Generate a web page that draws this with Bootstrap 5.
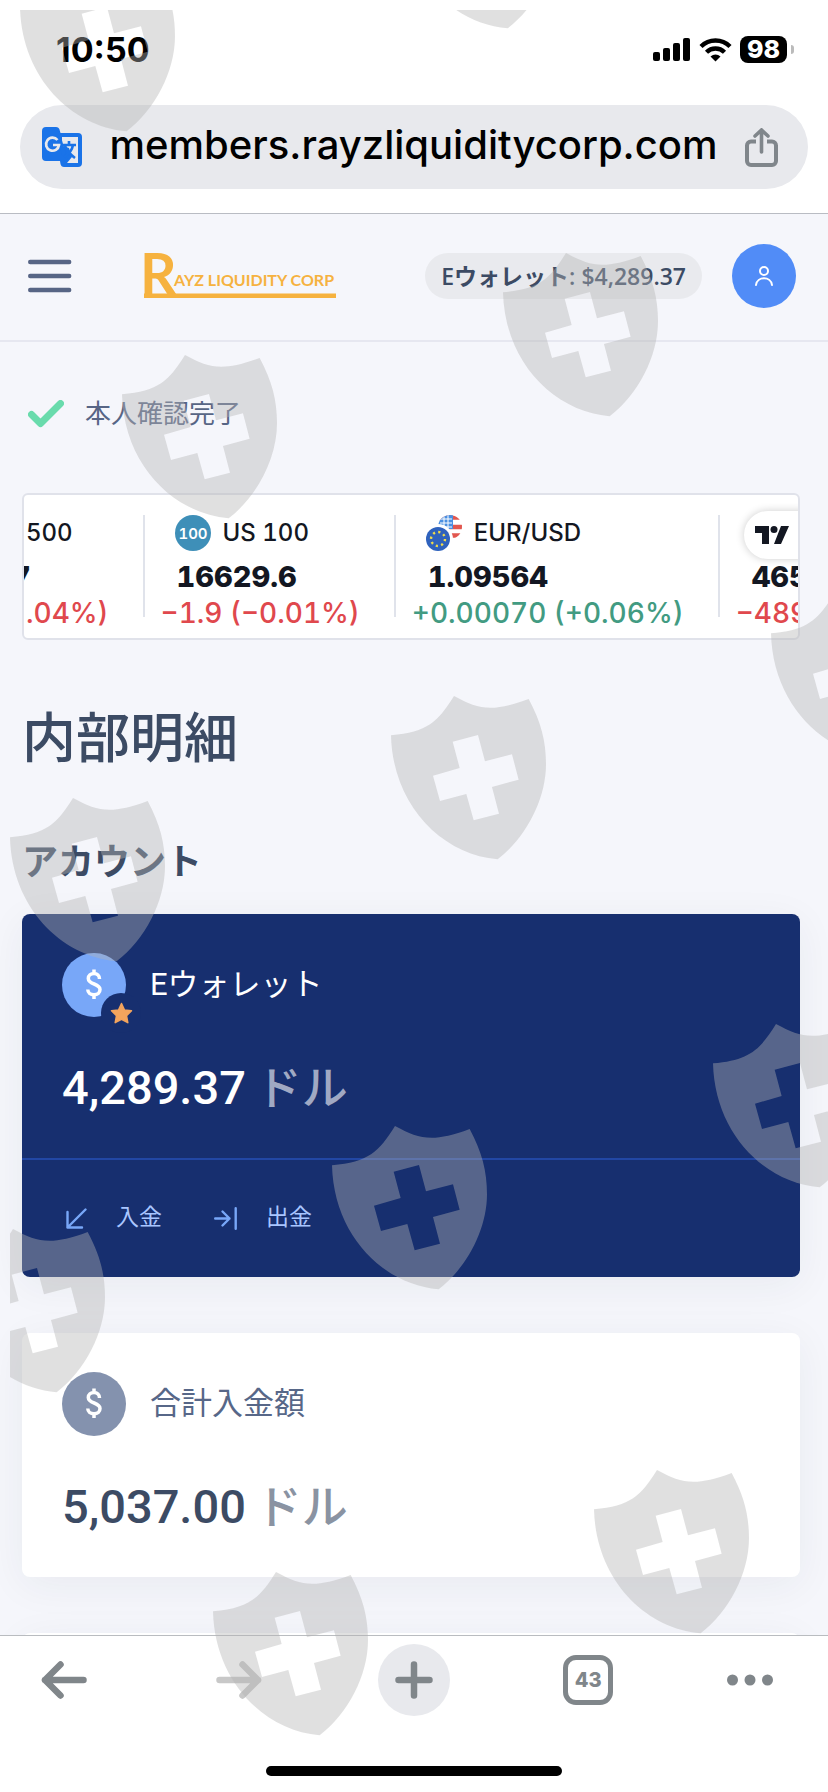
<!DOCTYPE html>
<html lang="ja">
<head>
<meta charset="utf-8">
<meta name="viewport" content="width=device-width, initial-scale=1">
<title>内部明細</title>
<link href="https://cdn.jsdelivr.net/npm/bootstrap@5.3.0/dist/css/bootstrap.min.css" rel="stylesheet">
<style>
body{font-family:Roboto,"Noto Sans CJK JP",sans-serif;background:#fff;color:#3c4b64}
svg{display:block;flex:none}
button{background:none;border:0;padding:0}
.screen{height:100vh}
.status{font-family:Inter,sans-serif;color:#000;height:105px;padding:0 34px 6px 56px}
.clock{font-size:34px;font-weight:700}
.battery{width:47px;height:27px;border-radius:8px;background:#000;color:#fff;font-size:25px;line-height:27px;font-weight:800}
.nub{width:3px;height:9px;border-radius:0 3px 3px 0;background:#bbb}
.address{height:84px;border-radius:42px;background:#e8e9ed;padding:0 30px 0 22px;margin:0 20px 24px}
.address input{font-family:Inter,sans-serif;font-size:40px;line-height:48px;font-weight:500;color:#000;background:none;border:0;min-width:0;outline:0}
.page{background:#f5f6fb;border-top:1px solid #b9bcc3}
.topbar{height:128px;border-bottom:2px solid #e6e7f0;padding:0 32px 2px 28px}
.brand-logo{margin-left:72px}
.wallet{margin-left:auto;height:46px;border-radius:23px;background:#e9eaee;color:#3c4b64;padding:0 16px;font:600 23px/46px "Open Sans","Noto Sans CJK JP",sans-serif;white-space:nowrap}
.avatar{width:64px;height:64px;background:#518cf7;margin-left:30px}
.content-area{padding:48px 28px 0 22px}
.verified{font-size:26px;line-height:48px;color:#576585;margin-bottom:55px;padding-left:6px;gap:21px}
.ticker{font-family:Inter,sans-serif;font-variant-numeric:tabular-nums;color:#131722;background:#fff;border:2px solid #e0e2ea;border-radius:6px;padding:20px 0 7px;white-space:nowrap}
.quote{padding:0 34px 0 18px;flex:none}
.quote + .quote{background:linear-gradient(#e0e3eb,#e0e3eb) no-repeat left top/2px 102px}
.quote-first{padding-left:2px}
.quote .sym{height:36px;padding-left:14px;gap:12px;font-size:24px;font-weight:500}
.quote .val{font-size:29px;line-height:36px;font-weight:800;margin-top:8px;padding-left:16px}
.quote .chg{font-size:28px;line-height:36px;font-weight:500}
.quote-first .sym{padding-left:0}
.quote-first .val{padding-left:0;margin-left:-14px}
.down{color:#e0484d}
.up{color:#429b82}
.tv{width:80px;height:48px;margin:-4px 0 -8px 8px;border-radius:24px;padding-left:11px;background:#fff;box-shadow:0 0 8px rgba(0,0,0,.2)}
h1{font-size:54px;line-height:64px;font-weight:500;margin:68px 0 67px}
h2{font-size:36px;line-height:48px;font-weight:700;margin:0 0 27px}
.account{border:0;border-radius:8px;color:#3c4b64;box-shadow:0 8px 40px rgba(40,45,60,.06);margin-bottom:56px}
.account .card-body{padding:39px 40px 38px}
.coin{width:64px;height:64px}
.name{font-size:31px;line-height:64px;color:#576788}
.amount{font-size:47px;line-height:64px;font-weight:500;margin-top:39px;gap:10px}
.unit{font-size:46px;font-weight:500;color:#8a93a2}
.primary-acct{background:#172f6f;color:#fff}
.primary-acct .name{color:#fff}
.primary-acct .unit{color:#a0a9c3}
.actions{border-top:2px solid #2247a4;height:119px;padding:0 44px;gap:52px}
.actions a{font-size:23px;color:#a9c6ff;text-decoration:none;gap:29px}
.toolbar{border-top:1px solid #b9bcc0;height:157px;background:#fff;padding:8px 55px 16px 28px}
.tool{width:72px;height:72px}
.tool-last{width:46px}
.new-tab{background:#e8e9ed}
.tab-count{width:50px;height:50px;border:5px solid #80868a;border-radius:13px;font:800 20px/40px Inter,sans-serif;color:#80868a}
.home-row{padding-left:27px}
.home-bar{width:296px;height:10px;border-radius:5px;background:#000}
.pattern{inset:10px 0 0 10px;pointer-events:none;overflow:hidden;z-index:5}
</style>
</head>
<body>
<div class="screen position-relative d-flex flex-column overflow-hidden">
  <div class="status d-flex align-items-center justify-content-between flex-shrink-0">
    <span class="clock">10:50</span>
    <div class="d-flex align-items-center">
      <svg width="38" height="24" viewBox="0 0 38 24"><rect y="14" width="7" height="9" rx="2"/><rect x="10" y="10" width="7" height="13" rx="2"/><rect x="20" y="5" width="7" height="18" rx="2"/><rect x="30" width="7" height="23" rx="2"/></svg>
      <svg class="ms-2 me-2" width="33" height="24" viewBox="0 0 33 24"><g fill="none" stroke="#000" stroke-width="4.4"><path d="M2 8.5C10 .5 23 .5 31 8.5"/><path d="M7.5 14.2c5-5 13-5 18 0"/></g><path d="M11.5 18.500c3-2.700 7-2.700 10 0l-5 5z"/></svg>
      <span class="battery text-center">98</span><span class="nub ms-1"></span>
    </div>
  </div>
  <div class="address d-flex align-items-center flex-shrink-0">
    <svg width="40" height="40" viewBox="0 0 40 40"><path fill="#1a73e8" d="M4 0h10c2 0 3 1 3.500 2.500L18.500 6H36a4 4 0 0 1 4 4v26a4 4 0 0 1-4 4H22c-2 0-3-1-3.500-3L18 34H4a4 4 0 0 1-4-4V4a4 4 0 0 1 4-4z"/><path d="M20 10h16v26H25l5-6-3-9-7-2z" fill="#e8e9ed"/><path d="M19 10l7 24-6-6-2-8z" fill="#1a73e8"/><path d="M15.500 13A6.500 6.500 0 1 0 17 18h-6" fill="none" stroke="#e8e9ed" stroke-width="2.700"/><path d="M21 18h13M27 14v4M31 18c-1 6-4 9-9 12M23 19c2 6 6 9 10 12" fill="none" stroke="#1a73e8" stroke-width="2.600"/></svg>
    <input class="flex-grow-1 text-center p-0 pb-1" type="text" value="members.rayzliquiditycorp.com" aria-label="アドレス" readonly>
    <button type="button" aria-label="共有"><svg width="33" height="39" viewBox="0 0 33 39" fill="none" stroke="#80868b" stroke-width="4"><path d="M11 13.500H6a4 4 0 0 0-4 4V33a4 4 0 0 0 4 4h21a4 4 0 0 0 4-4V17.500a4 4 0 0 0-4-4h-5"/><path d="M16.500 24V3M10 8l6.500-6L23 8" stroke-linecap="round" stroke-width="3.600"/></svg></button>
  </div>

  <main class="page flex-grow-1 overflow-hidden">
    <header class="topbar d-flex align-items-center">
      <button type="button" aria-label="メニュー"><svg width="44" height="34" viewBox="0 0 44 34" stroke="#576585" stroke-width="4.400" stroke-linecap="round"><path d="M2.200 3h39M2.200 17h39M2.200 31h39"/></svg></button>
      <a href="#" class="brand-logo" aria-label="RAYZ LIQUIDITY CORP"><svg class="overflow-visible" width="192" height="46" viewBox="0 0 192 46" fill="#f6b23f" font-family="Lato,sans-serif" font-weight="700"><text x="-4" y="42" font-size="57">R</text><text x="30" y="33" font-size="16">AYZ LIQUIDITY CORP</text><path d="M0 40.500h192V45H0z"/></svg></a>
      <span class="wallet">Eウォレット: $4,289.37</span>
      <button type="button" class="avatar rounded-circle d-flex align-items-center justify-content-center" aria-label="アカウント"><svg width="20" height="22" viewBox="0 0 20 22" fill="none" stroke="#fff" stroke-width="2"><circle cx="10" cy="6" r="4"/><path d="M2 20c1-9 15-9 16 0" stroke-linecap="round"/></svg></button>
    </header>
    <div class="content-area">
      <div class="verified d-flex align-items-center"><svg width="36" height="28" viewBox="0 0 36 28" fill="none" stroke="#69dbac" stroke-width="7" stroke-linecap="round" stroke-linejoin="round"><path d="M3.500 14.500l9 9L32.500 3.500"/></svg><span>本人確認完了</span></div>

      <div class="ticker d-flex overflow-hidden">
        <div class="quote quote-first"><div class="sym d-flex align-items-center">500</div><div class="val">7</div><div class="chg down">.04%)</div></div>
        <div class="quote"><div class="sym d-flex align-items-center"><svg width="36" height="36" viewBox="0 0 36 36"><circle cx="18" cy="18" r="18" fill="#3e8fb8"/><text x="18" y="23.500" text-anchor="middle" fill="#fff" font-size="15" font-weight="600">100</text></svg>US 100</div><div class="val">16629.6</div><div class="chg down">−1.9 (−0.01%)</div></div>
        <div class="quote"><div class="sym d-flex align-items-center"><svg width="36" height="36" viewBox="0 0 36 36"><clipPath id="us"><circle cx="24" cy="12" r="12"/></clipPath><g clip-path="url(#us)"><path fill="#fff" d="M12 0h24v24H12z"/><path d="M12 2.500h24M12 12h24M12 20.500h24" stroke="#e2574f" stroke-width="4.500"/><path fill="#4a90e2" d="M12 0h15v14H12z"/><path d="M14 4h12M14 8h12M14 12h12M18 0v14M22 0v14" stroke="#fff" stroke-width="1"/></g><circle cx="12" cy="24" r="15" fill="#fff"/><circle cx="12" cy="24" r="12" fill="#2f62bd"/><circle cx="12" cy="24" r="7" fill="none" stroke="#f0dc4a" stroke-width="2.400" stroke-dasharray="2.200 3.298"/></svg>EUR/USD</div><div class="val">1.09564</div><div class="chg up">+0.00070 (+0.06%)</div></div>
        <div class="quote"><div class="tv d-flex align-items-center"><svg width="34" height="18" viewBox="0 0 34 18" fill="#131722"><path d="M0 0h14v18H7V7H0zM26 0h8l-8 18h-7z"/><circle cx="19" cy="3.500" r="3.500"/></svg></div><div class="val">465</div><div class="chg down">−489</div></div>
      </div>

      <h1>内部明細</h1>
      <h2>アカウント</h2>

      <section class="card account primary-acct">
        <div class="card-body">
          <div class="d-flex gap-4">
            <svg class="coin overflow-visible" viewBox="0 0 64 64"><circle cx="32" cy="32" r="32" fill="#78a7f8"/><circle cx="59" cy="60" r="20" fill="#172f6f"/><path fill="#f3a45d" stroke="#f3a45d" stroke-width="1.500" stroke-linejoin="round" d="M59.500 50.500l3 6.500 7 .8-5 4.900 1.300 7-6.300-3.400-6.300 3.400 1.300-7-5-4.900 7-.8z"/><path d="M37.500 26c0-3.500-2.300-5.500-5.500-5.500s-5.700 2-5.700 5c0 6.500 11.700 4.500 11.700 11 0 3.300-2.500 5.300-6 5.300s-6.200-2-6.200-5.300M32 16.500v4M32 42v4" fill="none" stroke="#fff" stroke-width="3.500"/></svg>
            <span class="name">Eウォレット</span>
          </div>
          <div class="amount d-flex"><span>4,289.37</span><span class="unit">ドル</span></div>
        </div>
        <div class="actions d-flex align-items-center">
          <a href="#" class="d-flex align-items-center"><svg width="21" height="21" viewBox="0 0 21 21" fill="none" stroke="#78a7f8" stroke-width="2.400" stroke-linecap="round" stroke-linejoin="round"><path d="M19.500 1.500l-18 18M1.500 4v15.500H16"/></svg>入金</a>
          <a href="#" class="d-flex align-items-center"><svg width="23" height="23" viewBox="0 0 23 23" fill="none" stroke="#78a7f8" stroke-width="2.400" stroke-linecap="round" stroke-linejoin="round"><path d="M1.200 11.500H15.500M8.500 4.500l7 7-7 7M21.700 1.200v20.600"/></svg>出金</a>
        </div>
      </section>

      <section class="card account bg-white">
        <div class="card-body">
          <div class="d-flex gap-4">
            <svg class="coin" viewBox="0 0 64 64"><circle cx="32" cy="32" r="32" fill="#8492ae"/><path d="M37.500 26c0-3.500-2.300-5.500-5.500-5.500s-5.700 2-5.700 5c0 6.500 11.700 4.500 11.700 11 0 3.300-2.500 5.300-6 5.300s-6.200-2-6.200-5.300M32 16.500v4M32 42v4" fill="none" stroke="#fff" stroke-width="3.500"/></svg>
            <span class="name">合計入金額</span>
          </div>
          <div class="amount d-flex"><span>5,037.00</span><span class="unit">ドル</span></div>
        </div>
      </section>
      <section class="card account bg-white"><div class="card-body"></div></section>
    </div>
  </main>

  <footer class="toolbar d-flex flex-column justify-content-between flex-shrink-0">
    <nav class="d-flex justify-content-between">
      <button type="button" class="tool d-flex align-items-center justify-content-center" aria-label="戻る"><svg width="46" height="38" viewBox="0 0 46 38" fill="none" stroke="#80868a" stroke-width="6.500" stroke-linecap="round" stroke-linejoin="round"><path d="M19.500 3.500L4 19l15.500 15.500M4 19h38.500"/></svg></button>
      <button type="button" class="tool d-flex align-items-center justify-content-center" aria-label="進む"><svg width="46" height="38" viewBox="0 0 46 38" fill="none" stroke="#c8c8c8" stroke-width="6.500" stroke-linecap="round" stroke-linejoin="round"><path d="M26.500 3.500L42 19 26.500 34.500M42 19H3.500"/></svg></button>
      <button type="button" class="tool new-tab rounded-circle d-flex align-items-center justify-content-center" aria-label="新しいタブ"><svg width="38" height="38" viewBox="0 0 38 38" stroke="#80868a" stroke-width="6.500" stroke-linecap="round"><path d="M19 3.500v31M3.500 19h31"/></svg></button>
      <button type="button" class="tool d-flex align-items-center justify-content-center" aria-label="タブ一覧"><span class="tab-count text-center">43</span></button>
      <button type="button" class="tool tool-last d-flex align-items-center justify-content-center" aria-label="その他"><svg width="46" height="12" viewBox="0 0 46 12" fill="#80868a"><circle cx="5.500" cy="6" r="5.500"/><circle cx="23" cy="6" r="5.500"/><circle cx="40.500" cy="6" r="5.500"/></svg></button>
    </nav>
    <div class="home-row d-flex justify-content-center"><div class="home-bar"></div></div>
  </footer>

  <div class="pattern position-absolute" aria-hidden="true">
    <svg width="100%" height="100%">
      <defs><path id="shield" fill="#b3b3b3" fill-opacity=".41" fill-rule="evenodd" transform="scale(.3333)" d="M0 118C110 108 140 78 189 0C262 39 300 51 413 9C450 78 465 135 465 205C465 310 405 425 320 490C150 475 5 325 0 118ZM185 137L206 216 126 239 147 315 226 294 248 373 324 353 303 273 383 251 363 175 282 196 261 117Z"/></defs>
      <use href="#shield" x="10" y="-42"/><use href="#shield" x="391" y="-145"/><use href="#shield" x="493" y="243"/><use href="#shield" x="112" y="345"/><use href="#shield" x="761" y="584"/><use href="#shield" x="381" y="686"/><use href="#shield" x="0" y="788"/><use href="#shield" x="703" y="1014"/><use href="#shield" x="322" y="1116"/><use href="#shield" x="-60" y="1219"/><use href="#shield" x="584" y="1460"/><use href="#shield" x="203" y="1562"/>
    </svg>
  </div>
</div>
<script src="https://cdn.jsdelivr.net/npm/bootstrap@5.3.0/dist/js/bootstrap.bundle.min.js"></script>
</body>
</html>
